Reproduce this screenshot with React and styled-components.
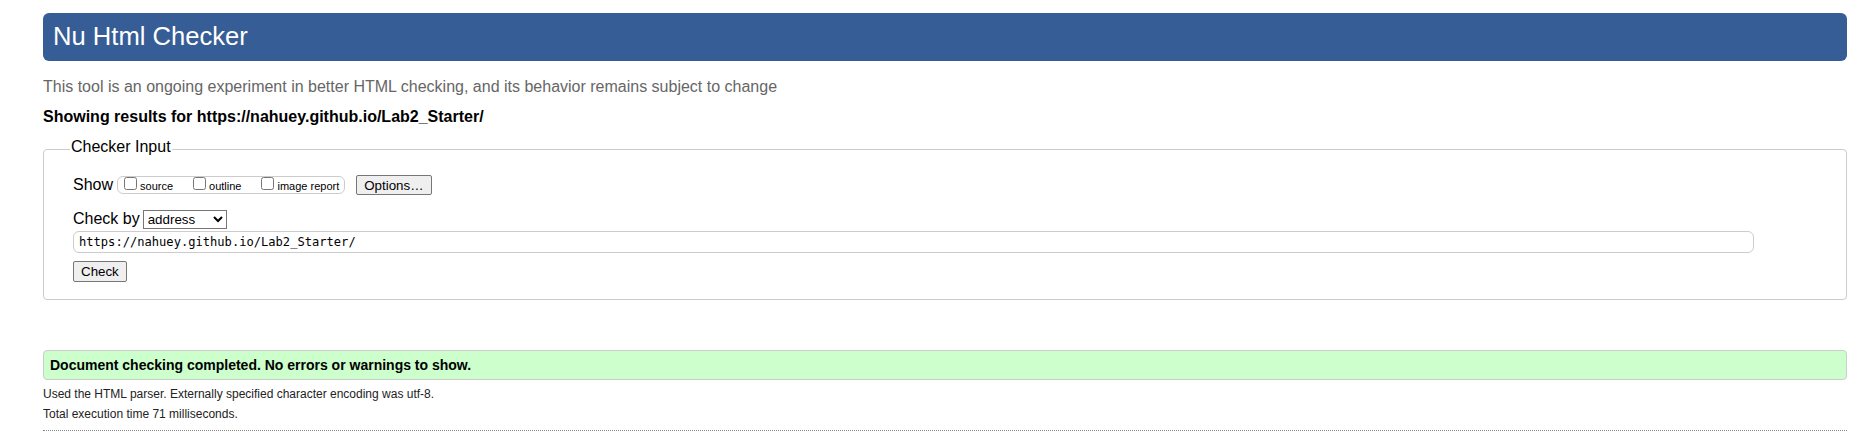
import React from "react";
import styled, { createGlobalStyle } from "styled-components";

const GlobalStyle = createGlobalStyle`
  html, body {
    margin: 0;
    padding: 0;
    background: #fff;
  }
  body {
    font-family: "Liberation Sans", Arial, sans-serif;
    font-size: 16px;
    color: #000;
  }
`;

const Page = styled.div`
  padding: 13px 10px 0 43px;
`;

const Title = styled.h1`
  margin: 0;
  height: 48px;
  box-sizing: border-box;
  padding: 0 10px 2px;
  line-height: 46px;
  font-size: 25.6px;
  font-weight: normal;
  color: #fff;
  background: #365d95;
  border-radius: 6px;
`;

const About = styled.p`
  margin: 16px 0 0;
  line-height: 20px;
  color: #666;
`;

const Showing = styled.p`
  margin: 10px 0 0;
  line-height: 20px;
  font-weight: bold;
`;

const InputBox = styled.fieldset`
  margin: 12px 0 0;
  padding: 16px 12px 17px 29px;
  border: 1px solid #ccc;
  border-radius: 4px;
  min-width: 0;
`;

const Legend = styled.legend`
  margin-left: -3px;
  padding: 0 1px 4px;
  font-size: 16px;
  line-height: 16px;
`;

const Row = styled.div`
  display: flex;
  align-items: ${(p) => p.$align || "center"};
  height: ${(p) => p.$h}px;
  margin-top: ${(p) => p.$top || 0}px;
`;

const RowLabel = styled.span`
  font-size: 16px;
  line-height: ${(p) => p.$lh || 20}px;
`;

const ShowGroup = styled.span`
  display: flex;
  align-items: center;
  gap: 16px;
  height: 18px;
  box-sizing: border-box;
  margin: 0 11px 0 4px;
  padding: 0 5px 0 2px;
  border: 1px solid #ccc;
  border-radius: 6px;
  font-size: 11px;
`;

const Option = styled.label`
  display: flex;
  align-items: baseline;
  line-height: 14px;
`;

const Tick = styled.input.attrs({ type: "checkbox" })`
  width: 13px;
  height: 13px;
  margin: 0 3px 0 4px;
`;

const Button = styled.button`
  height: ${(p) => p.$h}px;
  padding: 0 7px;
  font-family: "Liberation Sans", Arial, sans-serif;
  font-size: 13.33px;
  color: #000;
  background: #efefef;
  border: 1px solid #767676;
  border-radius: 2px;
`;

const Select = styled.select`
  width: 84px;
  height: 19px;
  margin-left: 3px;
  font-family: "Liberation Sans", Arial, sans-serif;
  font-size: 13.33px;
  color: #000;
  background: #fff;
  border: 1px solid #767676;
  border-radius: 0;
`;

const UrlField = styled.input`
  display: block;
  width: calc(100% - 80px);
  height: 22px;
  box-sizing: border-box;
  margin: 2px 0 0;
  padding: 0 5px;
  font-family: "DejaVu Sans Mono", monospace;
  font-size: 12.1px;
  color: #000;
  border: 1px solid #ccc;
  border-radius: 6px;
`;

const CheckRow = styled.div`
  margin-top: 8px;
`;

const Success = styled.p`
  margin: 50px 0 0;
  height: 30px;
  box-sizing: border-box;
  padding: 0 6px;
  line-height: 28px;
  font-size: 14px;
  font-weight: bold;
  background: #ccffcc;
  border: 1px solid #ccc;
  border-radius: 4px;
`;

const Detail = styled.p`
  margin: ${(p) => (p.$first ? "4px" : "0")} 0 0;
  font-size: 12px;
  line-height: 20px;
  color: #222;
`;

const Rule = styled.hr`
  margin: 6px 0 0;
  height: 0;
  border: 0;
  border-top: 1px dotted #888;
`;

export default function App() {
  return (
    <>
      <GlobalStyle />
      <Page>
        <Title>Nu Html Checker</Title>
        <About>
          This tool is an ongoing experiment in better HTML checking, and its
          behavior remains subject to change
        </About>
        <Showing>Showing results for https://nahuey.github.io/Lab2_Starter/</Showing>

        <InputBox>
          <Legend>Checker Input</Legend>
          <Row $h={20}>
            <RowLabel>Show</RowLabel>
            <ShowGroup>
              <Option>
                <Tick />
                source
              </Option>
              <Option>
                <Tick />
                outline
              </Option>
              <Option>
                <Tick />
                image report
              </Option>
            </ShowGroup>
            <Button type="button" $h={20}>
              Options…
            </Button>
          </Row>
          <Row $h={19} $top={15} $align="flex-start">
            <RowLabel $lh={18}>Check by</RowLabel>
            <Select defaultValue="address">
              <option value="address">address</option>
              <option value="file">file upload</option>
              <option value="text">text input</option>
            </Select>
          </Row>
          <UrlField
            type="url"
            defaultValue="https://nahuey.github.io/Lab2_Starter/"
          />
          <CheckRow>
            <Button type="button" $h={21}>
              Check
            </Button>
          </CheckRow>
        </InputBox>

        <Success>Document checking completed. No errors or warnings to show.</Success>
        <Detail $first>
          Used the HTML parser. Externally specified character encoding was
          utf-8.
        </Detail>
        <Detail>Total execution time 71 milliseconds.</Detail>
        <Rule />
      </Page>
    </>
  );
}
